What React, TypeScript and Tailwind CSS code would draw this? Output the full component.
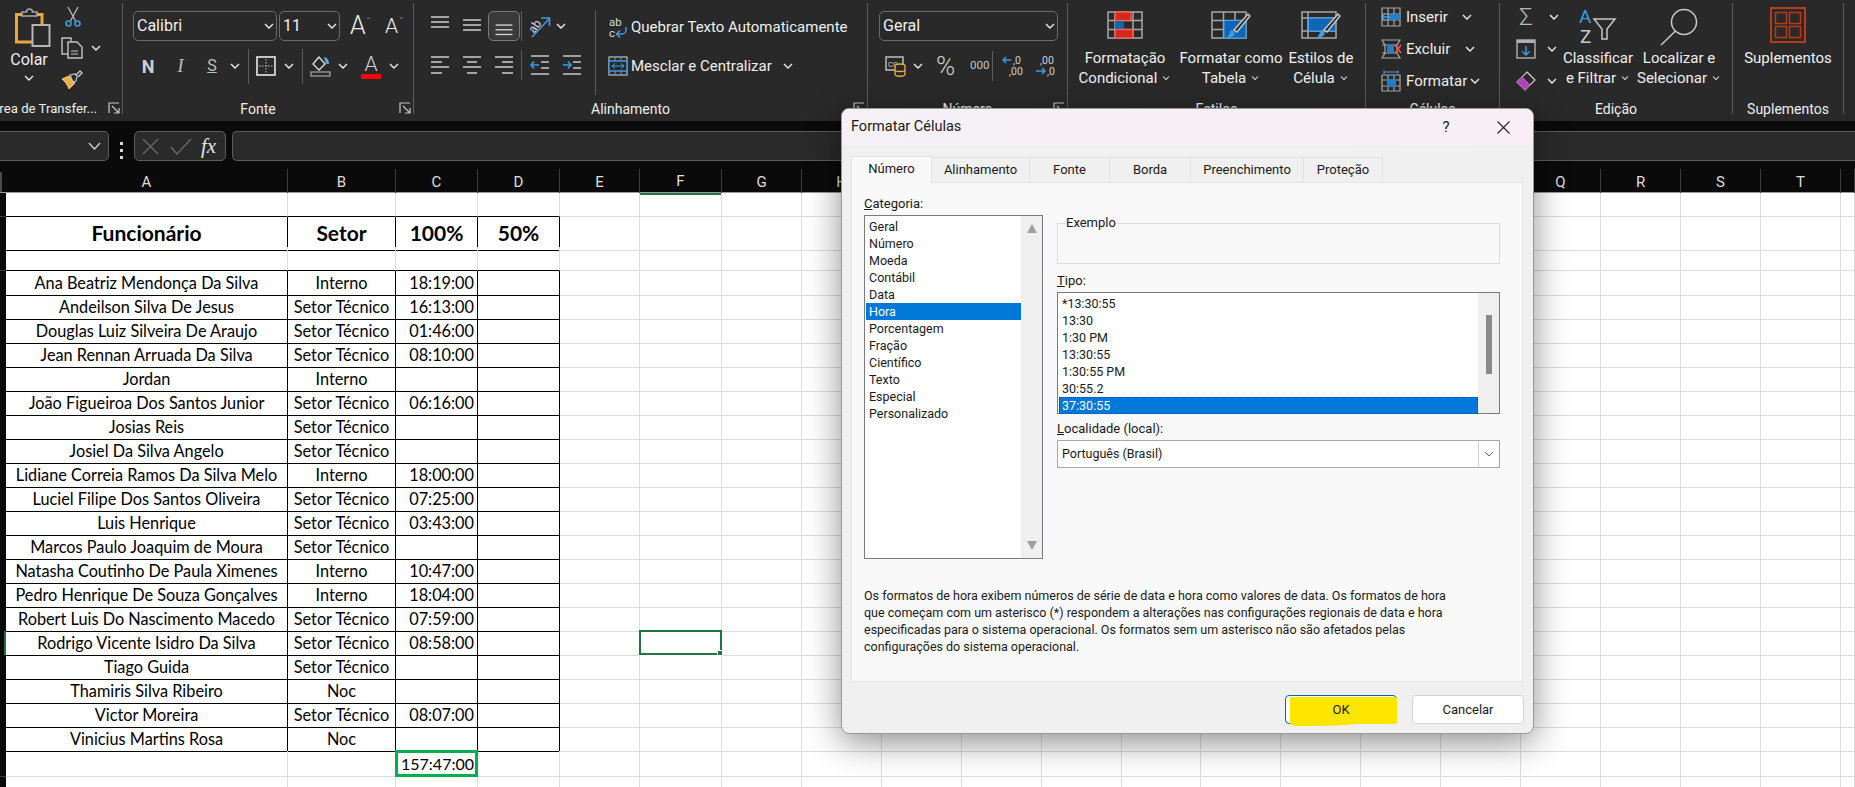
import React from "react";

const Chev = ({ c = "" }: { c?: string }) => (
  <svg width="10" height="6" viewBox="0 0 10 6" className={"shrink-0 " + c}>
    <polyline points="1,1 5,5 9,1" fill="none" stroke="#ececec" strokeWidth="1.4" />
  </svg>
);

const Launcher = () => (
  <svg width="12" height="12" viewBox="0 0 12 12" className="absolute right-[2px] top-[99px]">
    <path d="M1 11V1h10M4 4l6.5 6.5M6 11h5V6" fill="none" stroke="#c8c8c8" strokeWidth="1.2" />
  </svg>
);

const Group = ({ w, label, lc = "justify-center", launcher, children }: { w: string; label: React.ReactNode; lc?: string; launcher?: boolean; children: React.ReactNode }) => (
  <div className={"relative shrink-0 h-[111px] mt-[3px] border-r border-[#5c5c5c] " + w}>
    <div className="h-[96px] flex">{children}</div>
    <div className={"h-[20px] flex items-center overflow-hidden whitespace-nowrap text-[14px] " + lc}>{label}</div>
    {launcher && <Launcher />}
  </div>
);

const VSep = ({ c = "h-[30px]" }: { c?: string }) => <div className={"w-px bg-[#5c5c5c] shrink-0 " + c} />;

const Box = ({ c, children }: { c: string; children?: React.ReactNode }) => (
  <div className={"h-[30px] rounded-[5px] border border-[#6a6a6a] flex items-center justify-between pl-[3px] pr-[2px] text-[16px] " + c}>
    {children}
  </div>
);

const Lines = ({ ys, short = [], align = "c" }: { ys: number[]; short?: number[]; align?: "l" | "c" | "r" }) => (
  <svg width="32" height="30" viewBox="0 0 32 30">
    {ys.map((y, i) => {
      const s = short.includes(i);
      const x1 = !s ? 7 : align === "l" ? 7 : align === "c" ? 11 : 14;
      const x2 = !s ? 25 : align === "l" ? 18 : align === "c" ? 21 : 25;
      return <line key={i} x1={x1} x2={x2} y1={y} y2={y} stroke="#cfcfcf" strokeWidth="1.5" />;
    })}
  </svg>
);

const Paste = () => (
  <svg width="36" height="40" viewBox="0 0 36 40">
    <path d="M1.5 7.5H27V35H1.5Z" fill="none" stroke="#eba63c" strokeWidth="3" />
    <path d="M7 9V5h4.5a3 3 0 0 1 6 0H22v4Z" fill="#292929" stroke="#a8a8a8" strokeWidth="1.6" />
    <rect x="17.5" y="18" width="17" height="21" fill="#292929" stroke="#b5b5b5" strokeWidth="2" />
  </svg>
);
const Scissors = () => (
  <svg width="16" height="21" viewBox="0 0 16 21">
    <path d="M3 1l7.5 14M13 1L5.500 15" stroke="#b8b8b8" strokeWidth="1.3" fill="none" />
    <circle cx="3.500" cy="17.500" r="2.500" fill="none" stroke="#3d9be0" strokeWidth="1.6" />
    <circle cx="12.500" cy="17.500" r="2.500" fill="none" stroke="#3d9be0" strokeWidth="1.6" />
  </svg>
);
const Copy = () => (
  <svg width="22" height="22" viewBox="0 0 22 22">
    <path d="M8 17H1V1h9v3" fill="none" stroke="#c4c4c4" strokeWidth="1.4" />
    <path d="M7 5h9l5 5v11H7Z" fill="#292929" stroke="#c4c4c4" strokeWidth="1.4" />
    <path d="M10 14h7M10 17h7" stroke="#c4c4c4" strokeWidth="1.2" />
  </svg>
);
const Brush = () => (
  <svg width="22" height="20" viewBox="0 0 22 20">
    <path d="M1 9l7-3 6 7-6 6c-1-3-4-8-7-10Z" fill="#eeb04a" stroke="#f3c878" strokeWidth="1" />
    <path d="M9 5l5-1 2 2-1 5-3 1Z" fill="#292929" stroke="#c8c8c8" strokeWidth="1.2" />
    <path d="M15 5l4-4 2 2-4 4" fill="none" stroke="#c8c8c8" strokeWidth="1.4" />
  </svg>
);
const Borders = () => (
  <svg width="20" height="20" viewBox="0 0 20 20">
    <rect x="1" y="1" width="18" height="18" fill="none" stroke="#e8e8e8" strokeWidth="1.6" />
    <path d="M10 3v14M3 10h14" stroke="#c8c8c8" strokeWidth="1" strokeDasharray="1.500 1.500" />
  </svg>
);
const Fill = () => (
  <svg width="21" height="22" viewBox="0 0 21 22">
    <path d="M9 2L3 9l6 6 6-6Z" fill="none" stroke="#dcdcdc" strokeWidth="1.4" />
    <path d="M14 2c3 0 5 3 5 7h-3Z" fill="#59a5dd" />
    <rect x="1" y="17" width="19" height="4" fill="none" stroke="#a8a8a8" strokeWidth="1.2" />
  </svg>
);
const Orient = () => (
  <svg width="24" height="24" viewBox="0 0 24 24">
    <text x="1" y="16" transform="rotate(-55 8 12)" fontSize="12" fill="#dedede" fontFamily="Roboto, sans-serif">ab</text>
    <path d="M5 23L22 5M14 4h8.500v8" fill="none" stroke="#3d9be0" strokeWidth="1.6" />
  </svg>
);
const Indent = ({ flip = false }: { flip?: boolean }) => (
  <svg width="20" height="20" viewBox="0 0 20 20">
    <path d="M1 1h18M11 7h8M11 13h8M1 19h18" stroke="#c8c8c8" strokeWidth="1.5" />
    {flip ? (
      <path d="M1 10h8M6 6.500L9 10l-3 3.500" fill="none" stroke="#3d9be0" strokeWidth="1.6" />
    ) : (
      <path d="M9 10H1M4 6.500L1 10l3 3.500" fill="none" stroke="#3d9be0" strokeWidth="1.6" />
    )}
  </svg>
);
const Wrap = () => (
  <svg width="19" height="22" viewBox="0 0 19 22">
    <text x="0" y="10" fontSize="11.500" fill="#d8d8d8" fontFamily="Roboto, sans-serif">ab</text>
    <text x="0" y="21" fontSize="11.500" fill="#d8d8d8" fontFamily="Roboto, sans-serif">c</text>
    <path d="M17 11v3a4 4 0 0 1-4 4H8M11 14.500L7.500 18l3.500 3.500" fill="none" stroke="#3d9be0" strokeWidth="1.5" />
  </svg>
);
const Merge = () => (
  <svg width="20" height="20" viewBox="0 0 20 20">
    <rect x="1" y="1" width="18" height="18" fill="none" stroke="#a8a8a8" strokeWidth="1.4" />
    <rect x="1" y="5" width="18" height="10" fill="#292929" stroke="#3d9be0" strokeWidth="1.5" />
    <path d="M4 10h12M7 7.500L4 10l3 2.500M13 7.500l3 2.500-3 2.500M7 1v4M13 1v4M7 15v4M13 15v4" fill="none" stroke="#4aa3e3" strokeWidth="1" />
  </svg>
);
const Money = () => (
  <svg width="21" height="22" viewBox="0 0 21 22">
    <rect x="1" y="2" width="17" height="13" fill="none" stroke="#c8c8c8" strokeWidth="1.4" />
    <text x="3" y="11.500" fontSize="7.500" fill="#d0d0d0" fontFamily="Roboto, sans-serif">CC</text>
    <ellipse cx="15" cy="11" rx="5" ry="2" fill="#292929" stroke="#eeb04a" strokeWidth="1.3" />
    <path d="M10 11v8c0 3 10 3 10 0v-8M10 15c0 2 10 2 10 0" fill="#292929" stroke="#eeb04a" strokeWidth="1.3" />
  </svg>
);
const Dec = ({ up = false }: { up?: boolean }) => (
  <svg width="21" height="22" viewBox="0 0 21 22" fontFamily="Roboto, sans-serif" fontSize="10.500" fill="#cfcfcf">
    {up ? (
      <>
        <text x="11" y="9">,0</text>
        <text x="7" y="20">,00</text>
        <path d="M9 5H1M4 2L1 5l3 3" fill="none" stroke="#3d9be0" strokeWidth="1.5" />
      </>
    ) : (
      <>
        <text x="5" y="9">,00</text>
        <text x="12" y="20">,0</text>
        <path d="M1 16h9M7 13l3 3-3 3" fill="none" stroke="#3d9be0" strokeWidth="1.5" />
      </>
    )}
  </svg>
);
const CondFmt = () => (
  <svg width="36" height="28" viewBox="0 0 36 28">
    <path d="M1 1h34v26H1ZM1 9.500h34M1 18.500h34M8 1v26M26 1v26" fill="none" stroke="#a8a8a8" strokeWidth="1.500" />
    <rect x="8" y="1" width="16" height="8.500" fill="#d8281c" stroke="#ef6a64" strokeWidth="1.200" />
    <rect x="8" y="10" width="9" height="8" fill="#0f66b8" />
    <rect x="8" y="18.500" width="18" height="8.500" fill="#d8281c" stroke="#ef6a64" strokeWidth="1.200" />
  </svg>
);
const BrushTip = () => (
  <>
    <path d="M15 27c4 0 8-1 9-5l-3-3c-3 1-2 6-6 8Z" fill="#3d9be0" />
    <path d="M23 19L37 3l2 2-13 16Z" fill="#292929" stroke="#c8c8c8" strokeWidth="1.400" />
  </>
);
const TableFmt = () => (
  <svg width="40" height="28" viewBox="0 0 40 28">
    <path d="M1 1h34v26H1ZM1 9.500h34M1 18.500h34M12.500 1v26M24 1v26" fill="none" stroke="#a8a8a8" strokeWidth="1.500" />
    <rect x="13" y="9.500" width="22" height="17.500" fill="#0f66b8" stroke="#4aa3e3" />
    <BrushTip />
  </svg>
);
const CellStyle = () => (
  <svg width="40" height="28" viewBox="0 0 40 28">
    <path d="M1 1h34v26H1ZM1 7h34M1 20h34M7 1v26" fill="none" stroke="#a8a8a8" strokeWidth="1.500" />
    <rect x="7.500" y="7" width="27" height="13" fill="#0f66b8" stroke="#4aa3e3" />
    <BrushTip />
  </svg>
);
const Insert = () => (
  <svg width="20" height="20" viewBox="0 0 20 20">
    <path d="M1 1h18v18H1ZM1 7h18M1 13h18M7 1v18M13 1v18" fill="none" stroke="#a8a8a8" strokeWidth="1.200" />
    <rect x="8" y="7" width="11" height="6" fill="#1f7fd0" />
    <path d="M9 10H1M4 6.500L.500 10 4 13.500" fill="none" stroke="#4aa3e3" strokeWidth="1.500" />
  </svg>
);
const Del = () => (
  <svg width="21" height="20" viewBox="0 0 21 20">
    <path d="M1 1h18l-3 5v8l3 5H1l3-5V6ZM1 6h15M1 14h15" fill="none" stroke="#a8a8a8" strokeWidth="1.200" />
    <rect x="6" y="6" width="7" height="8" fill="#1f7fd0" />
    <path d="M14 6l6 8M20 6l-6 8" stroke="#ef5350" strokeWidth="1.600" />
  </svg>
);
const Fmt = () => (
  <svg width="20" height="22" viewBox="0 0 20 22">
    <path d="M1 5h18v16H1ZM1 10h18M1 16h18M7 5v16M13 5v16" fill="none" stroke="#a8a8a8" strokeWidth="1.200" />
    <rect x="6" y="9" width="9" height="8" fill="#1f7fd0" />
    <path d="M3 2h14M3 .500v3M17 .500v3" stroke="#4aa3e3" strokeWidth="1.200" />
  </svg>
);
const FillDown = () => (
  <svg width="20" height="20" viewBox="0 0 20 20">
    <rect x="1" y="1" width="18" height="18" fill="none" stroke="#b0b0b0" strokeWidth="1.400" />
    <rect x="1" y="1" width="18" height="3" fill="#b0b0b0" />
    <path d="M10 7v9M6.500 12.500L10 16l3.500-3.500" fill="none" stroke="#3d9be0" strokeWidth="1.500" />
  </svg>
);
const Eraser = () => (
  <svg width="20" height="20" viewBox="0 0 20 20">
    <path d="M11 1l8 8-10 10-8-8Z" fill="#292929" stroke="#d0d0d0" strokeWidth="1.200" />
    <path d="M6 6l8 8-5 5-8-8Z" fill="#b045b8" stroke="#c868cc" strokeWidth="1" />
  </svg>
);
const Sort = () => (
  <svg width="38" height="36" viewBox="0 0 38 36" fontFamily="Roboto, sans-serif" fontSize="19">
    <text x="0" y="15" fill="#3d9be0">A</text>
    <text x="1" y="35" fill="#c8c8c8">Z</text>
    <path d="M15 11h21l-8 10v10h-5V21Z" fill="none" stroke="#c8c8c8" strokeWidth="1.500" />
  </svg>
);
const Search = () => (
  <svg width="38" height="38" viewBox="0 0 38 38">
    <circle cx="24" cy="14" r="12.500" fill="none" stroke="#c8c8c8" strokeWidth="1.500" />
    <path d="M15.500 23L1 37" stroke="#c8c8c8" strokeWidth="1.500" />
  </svg>
);
const Addins = () => (
  <svg width="36" height="36" viewBox="0 0 36 36">
    <rect x="1" y="1" width="34" height="34" fill="none" stroke="#b83a17" strokeWidth="2" />
    <path d="M5.500 5.500h11v11h-11ZM19.500 5.500h11v11h-11ZM5.500 19.500h11v11h-11ZM19.500 19.500h11v11h-11Z" fill="none" stroke="#b83a17" strokeWidth="1.500" />
  </svg>
);

const Big = ({ w, icon, l1, l2 }: { w: string; icon: React.ReactNode; l1: string; l2: string }) => (
  <div className={"shrink-0 flex flex-col items-center " + w}>
    <div className="h-[28px] flex justify-center">{icon}</div>
    <div className="mt-[9px] leading-[20px] text-center whitespace-nowrap">{l1}</div>
    <div className="leading-[20px] flex items-center gap-[4px] whitespace-nowrap">
      {l2}
      <Chev c="scale-75" />
    </div>
  </div>
);

const SmallRow = ({ icon, text, chev }: { icon: React.ReactNode; text: string; chev: string }) => (
  <div className="h-[32px] flex items-center">
    <div className="w-[25px] shrink-0">{icon}</div>
    <span>{text}</span>
    <Chev c={chev} />
  </div>
);

const Ribbon = () => (
  <div className="h-[121px] bg-[#292929] flex overflow-hidden text-[#efefef] text-[15px] font-[Roboto,sans-serif]">
    <Group w="w-[123px]" label={<span className="text-[13.200px]">Área de Transfer...</span>} lc="justify-end pr-[25px]" launcher>
      <div className="ml-[11px] w-[36px] flex flex-col items-center">
        <div className="mt-[4px] ml-[8px]"><Paste /></div>
        <div className="mt-[3px] text-[16px] leading-[20px]">Colar</div>
        <Chev c="mt-[5px]" />
      </div>
      <div className="ml-[14px] -mt-[3px] flex flex-col">
        <div className="h-[32px] pl-[4px] flex items-center"><Scissors /></div>
        <div className="h-[32px] flex items-center">
          <Copy />
          <Chev c="ml-[8px]" />
        </div>
        <div className="h-[32px] flex items-center"><Brush /></div>
      </div>
    </Group>

    <Group w="w-[291px]" label="Fonte" lc="justify-center pr-[20px]" launcher>
      <div className="pl-[10px] pt-[8px]">
        <div className="flex items-center gap-[2px]">
          <Box c="w-[144px]">Calibri <Chev /></Box>
          <Box c="w-[61px]">11 <Chev /></Box>
          <span className="ml-[8px] relative w-[24px] text-[25px] leading-[30px] font-light">A<span className="absolute left-[16px] top-[-3px] text-[#5aa9e6] text-[12px]">ˆ</span></span>
          <span className="ml-[9px] relative w-[22px] text-[21px] leading-[30px] font-light">A<span className="absolute left-[14px] top-[-3px] text-[#5aa9e6] text-[12px]">ˇ</span></span>
        </div>
        <div className="flex items-center h-[30px] mt-[10px]">
          <span className="ml-[8px] w-[14px] text-center font-bold text-[18px] text-[#cfcfcf]">N</span>
          <span className="ml-[19px] w-[13px] text-center italic text-[18px] font-[Liberation_Serif,serif] text-[#c0c0c0]">I</span>
          <span className="ml-[19px] w-[12px] text-center underline text-[16px] text-[#c0c0c0]">S</span>
          <Chev c="ml-[12px]" />
          <VSep c="h-[35px] ml-[8px]" />
          <div className="ml-[7px]"><Borders /></div>
          <Chev c="ml-[8px]" />
          <VSep c="h-[35px] ml-[8px]" />
          <div className="ml-[7px]"><Fill /></div>
          <Chev c="ml-[7px]" />
          <div className="ml-[13px] w-[20px] flex flex-col items-center">
            <span className="text-[21px] leading-[20px] font-light text-[#cfcfcf]">A</span>
            <div className="w-[20px] h-[5px] bg-[#ff0000]" />
          </div>
          <Chev c="ml-[8px]" />
        </div>
      </div>
    </Group>

    <Group w="w-[454px]" label="Alinhamento" lc="justify-center pr-[20px]" launcher>
      <div className="pl-[10px] pt-[8px]">
        <div className="flex items-center h-[30px]">
          <Lines ys={[6, 11, 16]} />
          <Lines ys={[9, 14, 19]} />
          <div className="w-[32px] h-[30px] rounded-[5px] border border-[#7a7a7a] bg-[#3a3a3a] flex items-center justify-center">
            <Lines ys={[14, 19, 24]} />
          </div>
          <VSep c="h-[30px] ml-[1px]" />
          <div className="ml-[5px]"><Orient /></div>
          <Chev c="ml-[5px]" />
        </div>
        <div className="flex items-center h-[30px] mt-[9px]">
          <Lines ys={[7, 12, 17, 23]} short={[1, 3]} align="l" />
          <Lines ys={[7, 12, 17, 23]} short={[1, 3]} align="c" />
          <Lines ys={[7, 12, 17, 23]} short={[1, 3]} align="r" />
          <VSep c="h-[30px] ml-[1px]" />
          <div className="ml-[8px]"><Indent /></div>
          <div className="ml-[12px]"><Indent flip /></div>
        </div>
      </div>
      <VSep c="h-[85px] mt-[7px] ml-[13px]" />
      <div className="pl-[12px] pt-[9px]">
        <div className="h-[30px] flex items-center ml-[1px] gap-[3px] whitespace-nowrap"><Wrap /> Quebrar Texto Automaticamente</div>
        <div className="h-[30px] mt-[9px] flex items-center gap-[3px] whitespace-nowrap"><Merge /> Mesclar e Centralizar <Chev c="ml-[8px]" /></div>
      </div>
    </Group>

    <Group w="w-[200px]" label="Número" launcher>
      <div className="pl-[11px] pt-[8px]">
        <Box c="w-[179px]">Geral <Chev /></Box>
        <div className="flex items-center h-[30px] mt-[10px]">
          <div className="ml-[6px]"><Money /></div>
          <Chev c="ml-[7px]" />
          <span className="ml-[13px] w-[26px] text-[26px] font-light text-[#cfcfcf]">%</span>
          <span className="ml-[8px] w-[24px] text-[11.500px] text-[#c8c8c8]">000</span>
          <VSep c="h-[30px] ml-[-2px]" />
          <div className="ml-[9px]"><Dec up /></div>
          <div className="ml-[12px]"><Dec /></div>
        </div>
      </div>
    </Group>

    <Group w="w-[298px]" label="Estilos">
      <div className="pl-[4px] pt-[8px] flex">
        <Big w="w-[106px]" icon={<CondFmt />} l1="Formatação" l2="Condicional" />
        <Big w="w-[106px]" icon={<TableFmt />} l1="Formatar como" l2="Tabela" />
        <Big w="w-[74px]" icon={<CellStyle />} l1="Estilos de" l2="Célula" />
      </div>
    </Group>

    <Group w="w-[134px]" label="Células">
      <div className="pl-[15px] -mt-[2px]">
        <SmallRow icon={<Insert />} text="Inserir" chev="ml-[14px]" />
        <SmallRow icon={<Del />} text="Excluir" chev="ml-[15px]" />
        <SmallRow icon={<Fmt />} text="Formatar" chev="ml-[3px]" />
      </div>
    </Group>

    <Group w="w-[233px]" label="Edição">
      <div className="pl-[16px] -mt-[2px] w-[60px] shrink-0">
        <div className="h-[32px] flex items-center gap-[13px]"><span className="w-[20px] text-center text-[24px] font-light text-[#b8b8b8]">Σ</span><Chev /></div>
        <div className="h-[32px] flex items-center gap-[11px]"><FillDown /><Chev /></div>
        <div className="h-[32px] flex items-center gap-[11px]"><Eraser /><Chev /></div>
      </div>
      <div className="pt-[5px] -ml-[2px] flex">
        <div className="w-[80px] flex flex-col items-center">
          <div className="h-[36px]"><Sort /></div>
          <div className="mt-[4px] leading-[20px]">Classificar</div>
          <div className="leading-[20px] flex items-center gap-[4px]">e Filtrar <Chev c="scale-75" /></div>
        </div>
        <div className="w-[82px] flex flex-col items-center">
          <div className="h-[36px]"><Search /></div>
          <div className="mt-[4px] leading-[20px]">Localizar e</div>
          <div className="leading-[20px] flex items-center gap-[4px] whitespace-nowrap">Selecionar <Chev c="scale-75" /></div>
        </div>
      </div>
    </Group>

    <Group w="w-[111px]" label="Suplementos">
      <div className="w-full flex flex-col items-center pt-[4px]">
        <Addins />
        <div className="mt-[5px] leading-[20px]">Suplementos</div>
      </div>
    </Group>
  </div>
);

const FormulaBar = () => (
  <div className="h-[48px] bg-[#0a0a0a] pt-[10px] flex">
    <div className="w-[109px] h-[30px] shrink-0 rounded-r-[5px] border border-l-0 border-[#5c5c5c] bg-[#2a2a2a] flex items-center justify-end pr-[7px]">
      <svg width="13" height="8" viewBox="0 0 13 8"><polyline points="1,1 6.500,7 12,1" fill="none" stroke="#d0d0d0" strokeWidth="1.300" /></svg>
    </div>
    <div className="w-[25px] shrink-0 flex flex-col items-center justify-center gap-[4px]">
      <div className="w-[3px] h-[3px] bg-[#d8d8d8]" />
      <div className="w-[3px] h-[3px] bg-[#d8d8d8]" />
      <div className="w-[3px] h-[3px] bg-[#d8d8d8]" />
    </div>
    <div className="w-[92px] h-[30px] shrink-0 rounded-[5px] border border-[#5c5c5c] bg-[#2a2a2a] flex items-center pl-[7px]">
      <svg width="17" height="17" viewBox="0 0 17 17"><path d="M1 1l15 15M16 1L1 16" stroke="#6a6a6a" strokeWidth="1.300" /></svg>
      <svg width="22" height="17" viewBox="0 0 22 17" className="ml-[11px]"><path d="M1 9l6 7L21 1" fill="none" stroke="#6a6a6a" strokeWidth="1.300" /></svg>
      <span className="ml-[9px] italic text-[21px] leading-[21px] text-[#e2e2e2] font-[Liberation_Serif,serif]">fx</span>
    </div>
    <div className="ml-[6px] flex-1 h-[30px] rounded-l-[5px] border border-r-0 border-[#5c5c5c] bg-[#2a2a2a]" />
  </div>
);

const GRID = "grid grid-cols-[6px_282px_108px_82px_82px_80px_82px_repeat(5,80px)_79px_repeat(8,80px)_14px]";
const COLS = "ABCDEFGHIJKLMNOPQRST".split("").concat([""]);
const G = "border-r border-b border-[#dcdcdc]";
const K = "border-r border-b border-black";
const GB = "border-r border-b border-b-black border-r-[#dcdcdc]";

const Header = () => (
  <div className={GRID + " h-[24px] bg-[#0a0a0a] border-b border-[#9a9a9a] text-[#dedede] text-[15px] font-[Roboto,sans-serif]"}>
    <div className="flex items-center"><div className="w-[2px] h-[20px] bg-[#4a4a4a]" /></div>
    {COLS.map((c, i) => (
      <div key={i} className={"flex items-center justify-center pt-px border-r border-[#3c3c3c] " + (c === "F" ? "border-b-2 border-b-[#217346]" : "")}>{c}</div>
    ))}
  </div>
);

const Blanks = () => (
  <>
    {Array.from({ length: 17 }).map((_, i) => (
      <div key={i} className={G} />
    ))}
  </>
);

const Rh = ({ sel = false }: { sel?: boolean }) => (
  <div className={"bg-[#0a0a0a] border-b border-[#3c3c3c] " + (sel ? "border-r-2 border-r-[#217346]" : "")} />
);

const ST = "Setor Técnico";
const DATA: [string, string, string][] = [
  ["Ana Beatriz Mendonça Da Silva", "Interno", "18:19:00"],
  ["Andeilson Silva De Jesus", ST, "16:13:00"],
  ["Douglas Luiz Silveira De Araujo", ST, "01:46:00"],
  ["Jean Rennan Arruada Da Silva", ST, "08:10:00"],
  ["Jordan", "Interno", ""],
  ["João Figueiroa Dos Santos Junior", ST, "06:16:00"],
  ["Josias Reis", ST, ""],
  ["Josiel Da Silva Angelo", ST, ""],
  ["Lidiane Correia Ramos Da Silva Melo", "Interno", "18:00:00"],
  ["Luciel Filipe Dos Santos Oliveira", ST, "07:25:00"],
  ["Luis Henrique", ST, "03:43:00"],
  ["Marcos Paulo Joaquim de Moura", ST, ""],
  ["Natasha Coutinho De Paula Ximenes", "Interno", "10:47:00"],
  ["Pedro Henrique De Souza Gonçalves", "Interno", "18:04:00"],
  ["Robert Luis Do Nascimento Macedo", ST, "07:59:00"],
  ["Rodrigo Vicente Isidro Da Silva", ST, "08:58:00"],
  ["Tiago Guida", ST, ""],
  ["Thamiris Silva Ribeiro", "Noc", ""],
  ["Victor Moreira", ST, "08:07:00"],
  ["Vinicius Martins Rosa", "Noc", ""],
];

const Sheet = () => (
  <div className="bg-white text-black text-[16.300px] font-[Lato,sans-serif] overflow-hidden">
    <Header />
    <div className={GRID + " h-[24px]"}>
      <Rh />
      <div className={GB} /><div className={GB} /><div className={GB} /><div className={GB} />
      <Blanks />
    </div>
    <div className={GRID + " h-[30px] font-bold text-[21px]"}>
      <Rh />
      <div className={K + " flex items-center justify-center pb-px"}>Funcionário</div>
      <div className={K + " flex items-center justify-center pb-px"}>Setor</div>
      <div className={K + " flex items-center justify-center pb-px"}>100%</div>
      <div className={K + " flex items-center justify-center pb-px"}>50%</div>
      <Blanks />
    </div>
    <div className={GRID + " h-[24px]"}>
      <Rh />
      <div className={GB} /><div className={GB} /><div className={GB} /><div className={GB} />
      <Blanks />
    </div>
    {DATA.map((r, i) => (
      <div key={i} className={GRID + " h-[24px]"}>
        <Rh sel={i === 15} />
        <div className={K + " flex items-center justify-center whitespace-nowrap"}>{r[0]}</div>
        <div className={K + " flex items-center justify-center whitespace-nowrap"}>{r[1]}</div>
        <div className={K + " flex items-center justify-end pr-[3px]"}>{r[2]}</div>
        <div className={K} />
        {Array.from({ length: 17 }).map((_, j) =>
          i === 15 && j === 1 ? (
            <div key={j} className="relative z-10 -mt-px -ml-px border-2 border-[#217346] h-[25px]">
              <div className="absolute -right-[3px] -bottom-[3px] w-[6px] h-[6px] bg-[#217346] border border-white" />
            </div>
          ) : (
            <div key={j} className={G} />
          )
        )}
      </div>
    ))}
    <div className={GRID + " h-[26px]"}>
      <Rh />
      <div className={G} />
      <div className={G} />
      <div className="relative z-10 -ml-px -mt-px h-[27px] w-[83px] border-[3px] border-[#00b050] flex items-center justify-end pr-[1px] text-[16px]">157:47:00</div>
      <div className={G} />
      <Blanks />
    </div>
    <div className={GRID + " h-[24px]"}>
      <Rh />
      <div className={G} /><div className={G} /><div className={G} /><div className={G} />
      <Blanks />
    </div>
  </div>
);

const TABS = ["Alinhamento", "Fonte", "Borda", "Preenchimento", "Proteção"];
const TABW = ["w-[98px]", "w-[80px]", "w-[81px]", "w-[113px]", "w-[79px]"];
const CATS = ["Geral", "Número", "Moeda", "Contábil", "Data", "Hora", "Porcentagem", "Fração", "Científico", "Texto", "Especial", "Personalizado"];
const TIPOS = ["*13:30:55", "13:30", "1:30 PM", "13:30:55", "1:30:55 PM", "30:55.2", "37:30:55"];

const Dialog = () => (
  <div className="absolute left-[841px] top-[108px] w-[693px] h-[626px] rounded-[8px] overflow-hidden bg-[#f0f0f0] border border-[#9a9a9a] shadow-[0_8px_34px_rgba(0,0,0,0.45)] text-[#1a1a1a] text-[12.500px] font-[Roboto,sans-serif]">
    <div className="h-[36px] bg-gradient-to-r from-[#f5f1f7] to-[#f9eef6] flex items-center pl-[9px]">
      <span className="flex-1 text-[14.500px]">Formatar Células</span>
      <span className="w-[58px] mr-[22px] text-[15px] text-center">?</span>
      <svg width="13" height="13" viewBox="0 0 13 13" className="mr-[23px]"><path d="M.500.500l12 12M12.500.500l-12 12" stroke="#222" strokeWidth="1.100" /></svg>
    </div>
    <div className="mt-[10px] ml-[9px] h-[27px] flex items-end">
      <div className="w-[81px] h-[27px] -mb-px relative z-10 bg-[#f9f9f9] border border-b-0 border-[#e4e4e4] flex items-center justify-center pb-[2px] text-[13px]">Número</div>
      {TABS.map((t, i) => (
        <div key={t} className={"h-[25px] border border-l-0 border-b-0 border-[#e2e2e2] bg-[#f0f0f0] flex items-center justify-center text-[13px] " + TABW[i]}>{t}</div>
      ))}
    </div>
    <div className="ml-[9px] w-[672px] h-[500px] bg-[#f9f9f9] border border-[#e4e4e4]">
      <div className="flex pl-[12px] pt-[13px]">
        <div className="w-[179px] shrink-0">
          <div className="h-[19px] leading-[16px] text-[13px]"><u>C</u>ategoria:</div>
          <div className="h-[344px] border border-[#7a7a80] bg-white flex">
            <div className="flex-1 pt-[2px] pl-px pr-0">
              {CATS.map((c) => (
                <div key={c} className={"h-[17px] leading-[17px] pl-[3px] " + (c === "Hora" ? "bg-[#0078d7] text-white" : "")}>{c}</div>
              ))}
            </div>
            <div className="w-[21px] bg-[#f0f0f0] flex flex-col items-center justify-between py-[8px]">
              <svg width="10" height="9" viewBox="0 0 10 9"><path d="M5 0l5 9H0Z" fill="#a0a0a0" /></svg>
              <svg width="10" height="9" viewBox="0 0 10 9"><path d="M5 9l5-9H0Z" fill="#a0a0a0" /></svg>
            </div>
          </div>
        </div>
        <div className="ml-[14px] w-[443px]">
          <div className="relative mt-[27px] h-[41px] border border-[#dcdcdc]">
            <span className="absolute left-[8px] -top-[9px] bg-[#f9f9f9] pr-[1px] leading-[16px] text-[13px]">Exemplo</span>
          </div>
          <div className="mt-[8px] h-[20px] leading-[18px] text-[13px]"><u>T</u>ipo:</div>
          <div className="h-[122px] border border-[#7a7a80] bg-white flex">
            <div className="flex-1 pt-[2px] pl-px">
              {TIPOS.map((t, i) => (
                <div key={i} className={"h-[17px] leading-[17px] pl-[3px] " + (i === 6 ? "bg-[#0078d7] text-white outline-1 -outline-offset-1 outline-dotted outline-[#1a3a5a]" : "")}>{t}</div>
              ))}
            </div>
            <div className="w-[21px] bg-[#f0f0f0] pt-[22px] flex justify-center">
              <div className="w-[6px] h-[59px] bg-[#8a8a8a]" />
            </div>
          </div>
          <div className="mt-[5px] h-[21px] leading-[20px] text-[13px]"><u>L</u>ocalidade (local):</div>
          <div className="h-[28px] border border-[#a8a8a8] bg-white flex items-center pl-[4px]">
            <span className="flex-1">Português (Brasil)</span>
            <div className="w-[21px] h-full border-l border-[#d0d0d0] flex items-center justify-center">
              <svg width="10" height="6" viewBox="0 0 10 6"><polyline points="1,1 5,5 9,1" fill="none" stroke="#666" /></svg>
            </div>
          </div>
        </div>
      </div>
      <p className="mt-[28px] mx-[12px] leading-[17px]">
        Os formatos de hora exibem números de série de data e hora como valores de data. Os formatos de hora<br />
        que começam com um asterisco (*) respondem a alterações nas configurações regionais de data e hora<br />
        especificadas para o sistema operacional. Os formatos sem um asterisco não são afetados pelas<br />
        configurações do sistema operacional.
      </p>
    </div>
    <div className="mt-[13px] flex justify-end pr-[9px] gap-[15px]">
      <div className="relative w-[112px] h-[29px] rounded-[4px] border border-[#0067c0] bg-white flex items-center justify-center text-[13px]">
        <svg width="110" height="30" viewBox="0 0 110 30" className="absolute left-[2px] top-[1px]">
          <path d="M3 0H108c1 0 1 1 1 3v22c0 1-1 2-2 2H68c-8 1-22 2-58 2-6 0-8-1-8-3V3c0-2 0-3 1-3Z" fill="#ffe600" />
        </svg>
        <span className="relative">OK</span>
      </div>
      <div className="w-[112px] h-[29px] rounded-[4px] border border-[#d4d4d4] bg-white flex items-center justify-center text-[13px]">Cancelar</div>
    </div>
  </div>
);

export default function App() {
  return (
    <div className="relative w-[1855px] h-[787px] overflow-hidden bg-white">
      <Ribbon />
      <FormulaBar />
      <Sheet />
      <Dialog />
    </div>
  );
}
